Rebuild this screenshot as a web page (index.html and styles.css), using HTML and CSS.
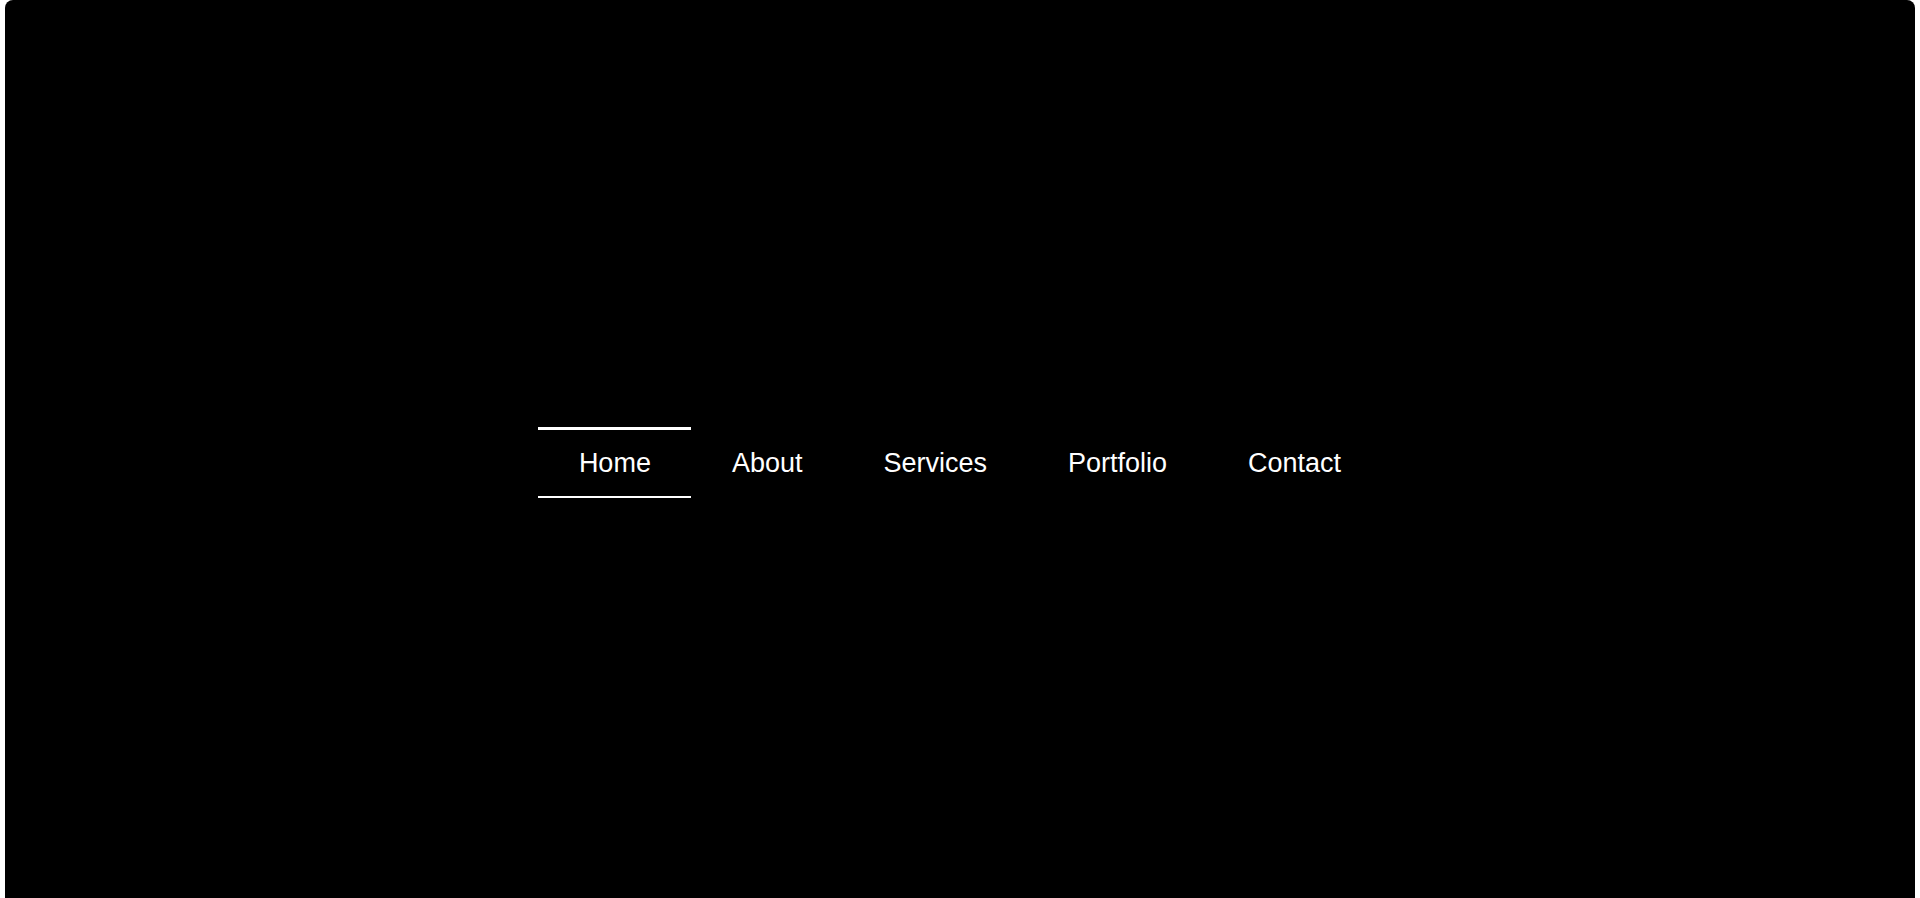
FILE: index.html
```html
<!DOCTYPE html>
<html lang="en">
<head>
  <meta charset="UTF-8" />
  <meta name="viewport" content="width=device-width, initial-scale=1" />
  <title>Menu</title>
  <link rel="stylesheet" href="styles.css">
</head>
<body>

<div class="stage">
  <nav class="menu">
    <a href="#" class="menu-item active">Home</a>
    <a href="#" class="menu-item">About</a>
    <a href="#" class="menu-item">Services</a>
    <a href="#" class="menu-item">Portfolio</a>
    <a href="#" class="menu-item">Contact</a>
  </nav>
</div>

</body>
</html>
```

FILE: styles.css
```css
html, body {
  margin: 0;
  padding: 0;
  background: #fff;
  overflow: hidden;
}
body {
  font-family: "Liberation Sans", Arial, sans-serif;
}
.stage {
  margin: 0 5px;
  height: 925px;
  background: #000;
  border-radius: 8px;
  display: flex;
  align-items: center;
  justify-content: center;
}
.menu {
  display: flex;
}
.menu-item {
  display: block;
  color: #fff;
  text-decoration: none;
  font-size: 27px;
  padding: 18px 40.5px 17px;
  border-top: 3px solid transparent;
  border-bottom: 2px solid transparent;
}
.menu-item.active {
  border-top-color: #fff;
  border-bottom-color: #fff;
}
```
